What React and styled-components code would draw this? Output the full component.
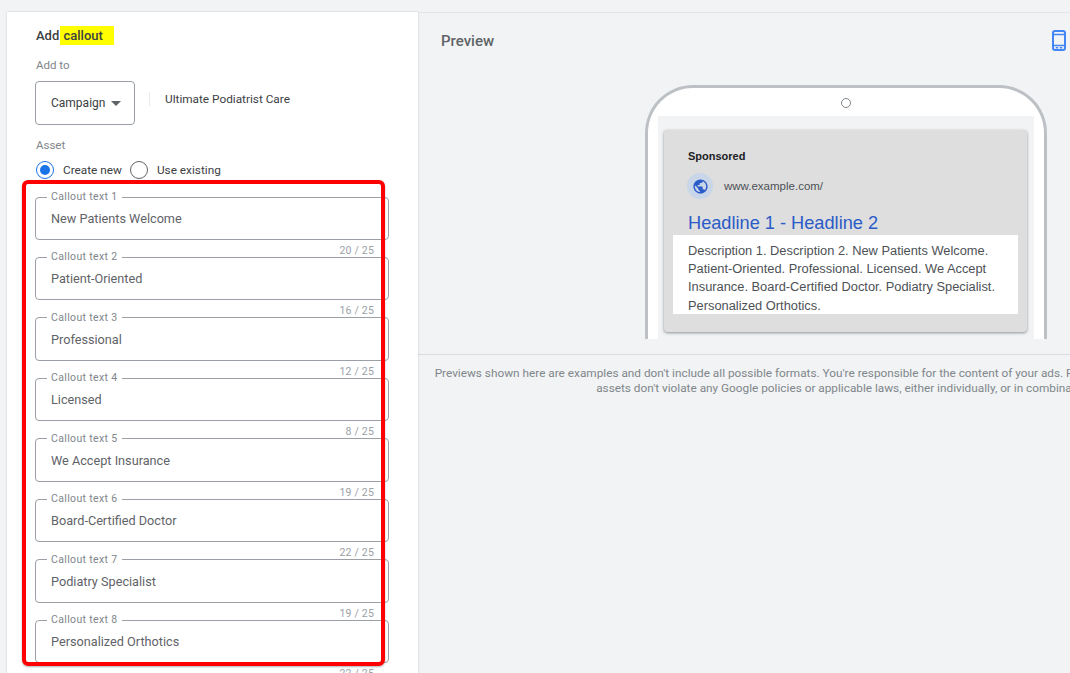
import styled, { createGlobalStyle } from 'styled-components';
import { MdPublic } from 'react-icons/md';

const GlobalStyle = createGlobalStyle`
  html, body {
    margin: 0;
    height: 100%;
    overflow: hidden;
    background: #f1f3f4;
  }
  * {
    box-sizing: border-box;
  }
`;

const Page = styled.div`
  width: 1070px;
  height: 673px;
  padding-top: 12px;
  display: flex;
  overflow: hidden;
  background: #f1f3f4;
  font-family: Roboto, "Liberation Sans", sans-serif;
`;

const FormPanel = styled.section`
  position: relative;
  flex: 0 0 411px;
  margin-left: 7px;
  padding: 14px 0 0 29px;
  background: #fff;
  box-shadow: 0 0 2px rgba(60, 64, 67, 0.25);
  overflow: hidden;
`;

const Title = styled.h2`
  margin: 0;
  height: 19px;
  font-size: 13px;
  font-weight: 500;
  line-height: 19px;
  color: #3c4043;
`;

const Marked = styled.span`
  display: inline-block;
  width: 54px;
  padding-left: 4px;
  margin-left: -3px;
  background: #ffff00;
`;

const SectionLabel = styled.div`
  margin-top: ${(p) => p.$top}px;
  font-size: 11.5px;
  line-height: 14px;
  color: #80868b;
`;

const TargetRow = styled.div`
  display: flex;
  align-items: flex-start;
  margin: 9px 0 0 -1px;
`;

const SelectBox = styled.div`
  width: 100px;
  height: 44px;
  display: flex;
  align-items: center;
  gap: 6px;
  padding-left: 15px;
  border: 1px solid #9aa0a6;
  border-radius: 4px;
  font-size: 12px;
  color: #3c4043;
`;

const Caret = styled.span`
  width: 0;
  height: 0;
  border-left: 5px solid transparent;
  border-right: 5px solid transparent;
  border-top: 5px solid #5f6368;
`;

const CampaignName = styled.div`
  margin: 11px 0 0 14px;
  padding-left: 15px;
  border-left: 1px solid #e8eaed;
  font-size: 11.8px;
  line-height: 14px;
  color: #3c4043;
`;

const RadioRow = styled.div`
  display: flex;
  align-items: center;
  height: 18px;
  margin-top: 9px;
  font-size: 11.8px;
  color: #3c4043;
`;

const RadioMark = styled.span`
  width: 18px;
  height: 18px;
  margin-right: 9px;
  display: flex;
  align-items: center;
  justify-content: center;
  border-radius: 50%;
  border: 1.5px solid ${(p) => (p.$on ? '#1a73e8' : '#5f6368')};
  &::after {
    content: '';
    width: 10px;
    height: 10px;
    border-radius: 50%;
    background: ${(p) => (p.$on ? '#1a73e8' : 'transparent')};
  }
`;

const RadioText = styled.span`
  margin-right: 8px;
`;

const FieldList = styled.div`
  margin: 12px 0 0 -1px;
  width: 354px;
`;

const FieldGroup = styled.div`
  height: 60.45px;
`;

const Field = styled.fieldset`
  margin: 0;
  padding: 0 0 0 15px;
  height: 49px;
  border: 1px solid #9aa0a6;
  border-radius: 4px;
`;

const FieldLegend = styled.legend`
  margin-left: -4px;
  padding: 0 4px;
  font-size: 10.5px;
  line-height: 12px;
  letter-spacing: 0.35px;
  color: #80868b;
`;

const FieldValue = styled.div`
  margin-top: 8px;
  font-size: 12.7px;
  line-height: 16px;
  color: #5f6368;
`;

const Counter = styled.div`
  margin-top: 5px;
  padding-right: 15px;
  text-align: right;
  font-size: 10.5px;
  line-height: 12px;
  letter-spacing: 0.2px;
  color: #9aa0a6;
`;

const Highlight = styled.div`
  position: absolute;
  left: 15px;
  top: 168px;
  width: 363px;
  height: 486px;
  border: 4px solid #ff0000;
  border-radius: 6px;
  box-shadow: 0 1px 2px rgba(60, 64, 67, 0.4);
  pointer-events: none;
`;

const PreviewPane = styled.section`
  flex: 0 0 652px;
  border-top: 1px solid #e3e5e8;
  display: flex;
  flex-direction: column;
  overflow: hidden;
`;

const PreviewArea = styled.div`
  height: 342px;
  border-bottom: 1px solid #dadce0;
  overflow: hidden;
`;

const PreviewHeader = styled.div`
  display: flex;
  justify-content: space-between;
  align-items: center;
  height: 21px;
  margin-top: 17px;
  padding: 0 4px 0 23px;
`;

const PreviewTitle = styled.h3`
  margin: 0;
  font-size: 15px;
  font-weight: 500;
  color: #5f6368;
`;

const Phone = styled.div`
  width: 402px;
  height: 254px;
  margin: 34px 0 0 227px;
  padding: 0 10px;
  background: #fff;
  border: 3px solid #bdc1c6;
  border-bottom: none;
  border-radius: 48px 48px 0 0;
  overflow: hidden;
`;

const Camera = styled.div`
  width: 10px;
  height: 10px;
  margin: 10px auto 8px;
  border: 1px solid #80868b;
  border-radius: 50%;
`;

const Screen = styled.div`
  height: 260px;
  padding: 14px 7px 0 6px;
  background: #f1f3f4;
`;

const AdCard = styled.div`
  height: 202px;
  padding: 20px 9px 0;
  background: #dedede;
  border-radius: 4px;
  box-shadow: 0 1px 3px rgba(60, 64, 67, 0.55);
  font-family: "Liberation Sans", Arial, sans-serif;
`;

const Sponsored = styled.div`
  padding-left: 15px;
  font-size: 11px;
  font-weight: 700;
  line-height: 13px;
  color: #202124;
`;

const UrlRow = styled.div`
  display: flex;
  align-items: center;
  gap: 11px;
  margin-top: 10px;
  padding-left: 14px;
  font-size: 11.5px;
  color: #4d5156;
`;

const GlobeBadge = styled.span`
  width: 26px;
  height: 26px;
  display: flex;
  align-items: center;
  justify-content: center;
  border-radius: 50%;
  background: #c9d5e8;
  color: #2a5bc8;
  font-size: 17px;
`;

const Headline = styled.div`
  margin-top: 12px;
  padding-left: 15px;
  font-size: 18.2px;
  line-height: 24px;
  color: #2a5bc8;
`;

const Description = styled.div`
  height: 79px;
  padding: 7px 14px 0 15px;
  background: #fff;
  font-size: 12.85px;
  line-height: 18.2px;
  color: #4d5156;
  overflow: hidden;
`;

const Disclaimer = styled.p`
  margin: 11px 0 0 0;
  width: 855px;
  text-align: center;
  white-space: nowrap;
  font-size: 11.8px;
  line-height: 14.5px;
  color: #80868b;
`;

const fields = [
  'New Patients Welcome',
  'Patient-Oriented',
  'Professional',
  'Licensed',
  'We Accept Insurance',
  'Board-Certified Doctor',
  'Podiatry Specialist',
  'Personalized Orthotics',
];

const PhoneIcon = () => (
  <svg width="14" height="21" viewBox="0 0 14 21" fill="none">
    <rect x="1" y="1" width="12" height="19" rx="2" stroke="#4285f4" strokeWidth="2" />
    <path d="M1.5 4.5h11M1.5 15.5h11" stroke="#4285f4" strokeWidth="1.5" />
    <path d="M3.8 17.8h2.4M7.8 17.8h2.4" stroke="#4285f4" strokeWidth="1.6" />
  </svg>
);

const App = () => (
  <Page>
    <GlobalStyle />
    <FormPanel>
      <Title>
        Add <Marked>callout</Marked>
      </Title>
      <SectionLabel $top={13}>Add to</SectionLabel>
      <TargetRow>
        <SelectBox>
          Campaign <Caret />
        </SelectBox>
        <CampaignName>Ultimate Podiatrist Care</CampaignName>
      </TargetRow>
      <SectionLabel $top={13}>Asset</SectionLabel>
      <RadioRow>
        <RadioMark $on />
        <RadioText>Create new</RadioText>
        <RadioMark />
        <RadioText>Use existing</RadioText>
      </RadioRow>
      <FieldList>
        {fields.map((text, i) => (
          <FieldGroup key={text}>
            <Field>
              <FieldLegend>Callout text {i + 1}</FieldLegend>
              <FieldValue>{text}</FieldValue>
            </Field>
            <Counter>{text.length} / 25</Counter>
          </FieldGroup>
        ))}
      </FieldList>
      <Highlight />
    </FormPanel>
    <PreviewPane>
      <PreviewArea>
        <PreviewHeader>
          <PreviewTitle>Preview</PreviewTitle>
          <PhoneIcon />
        </PreviewHeader>
        <Phone>
          <Camera />
          <Screen>
            <AdCard>
              <Sponsored>Sponsored</Sponsored>
              <UrlRow>
                <GlobeBadge>
                  <MdPublic />
                </GlobeBadge>
                www.example.com/
              </UrlRow>
              <Headline>Headline 1 - Headline 2</Headline>
              <Description>
                Description 1. Description 2. New Patients Welcome. Patient-Oriented. Professional.
                Licensed. We Accept Insurance. Board-Certified Doctor. Podiatry Specialist.
                Personalized Orthotics.
              </Description>
            </AdCard>
          </Screen>
        </Phone>
      </PreviewArea>
      <Disclaimer>
        Previews shown here are examples and don't include all possible formats. You're responsible
        for the content of your ads. Please make sure that your provided
        <br />
        assets don't violate any Google policies or applicable laws, either individually, or in
        combination.
      </Disclaimer>
    </PreviewPane>
  </Page>
);

export default App;
